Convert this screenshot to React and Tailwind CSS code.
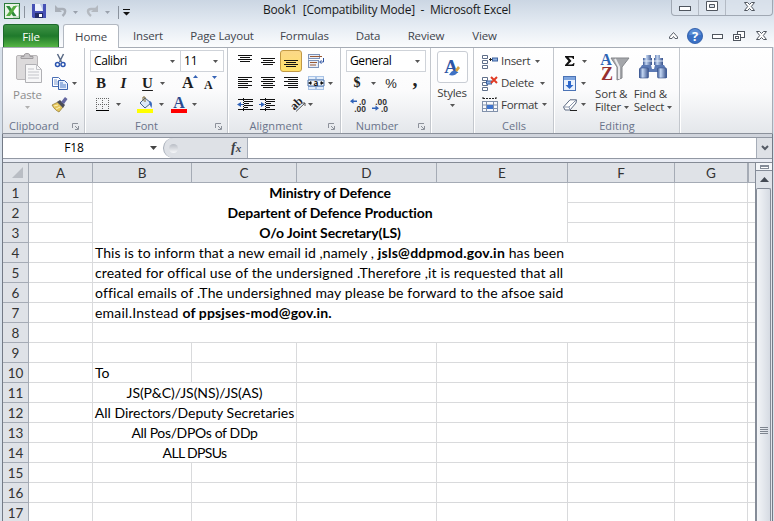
import React from "react";

const UI = "font-['Open_Sans','Noto_Sans',sans-serif]";
const SHEET = "font-['Lato','Open_Sans',sans-serif] [font-variant-ligatures:none]";

function Ico({ w, h, className = "", children }) {
  return (
    <svg width={w} height={h} viewBox={`0 0 ${w} ${h}`} className={`block shrink-0 overflow-visible ${className}`}>
      {children}
    </svg>
  );
}

function Caret({ className = "text-[#555]", big }) {
  return big ? (
    <Ico w={7} h={4} className={className}><path d="M0 0h7L3.500 4z" fill="currentColor" /></Ico>
  ) : (
    <Ico w={5} h={3} className={className}><path d="M0 0h5L2.500 3z" fill="currentColor" /></Ico>
  );
}

function Slot({ className = "", children }) {
  return <span className={`flex shrink-0 items-center justify-center ${className}`}>{children}</span>;
}

function Launcher() {
  return (
    <Ico w={7} h={7}>
      <path d="M0.500 5V0.500H6M3 3l3 3M6.500 3v3.500H3" fill="none" stroke="#8c919a" />
    </Ico>
  );
}

function Group({ className, label, labelClass = "", launcher, children }) {
  return (
    <section className={`flex shrink-0 flex-col border-r border-[#c3c7cd] shadow-[1px_0_0_#fff] ${className}`}>
      <div className="h-[67px]">{children}</div>
      <div className="flex h-[18px] items-center pt-[2px] pr-[5px]">
        <span className={`flex-1 whitespace-nowrap text-center text-[11px] leading-none text-[#69738a] ${labelClass}`}>{label}</span>
        {launcher && <span className="pt-[2px]"><Launcher /></span>}
      </div>
    </section>
  );
}

function Sep() {
  return <span className="h-5 w-px bg-[#c9cdd3]" />;
}

function Lines({ rows }) {
  return (
    <Ico w={14} h={14}>
      {rows.map(([x, y, w], i) => <rect key={i} x={x} y={y} width={w} height="1" fill="#111" />)}
    </Ico>
  );
}

function Combo({ className, children }) {
  return (
    <div className={`flex h-[22px] items-center justify-between border border-[#cfd3d9] bg-white pr-[5px] pl-[3px] text-[12px] text-black ${className}`}>
      <span>{children}</span>
      <Caret />
    </div>
  );
}

function TitleBar() {
  return (
    <header className="flex h-6 items-start pl-1">
      <div className="flex h-6 w-[259px] items-center">
        <Ico w={16} h={16} className="mt-[-2px]">
          <rect x="0.500" y="0.500" width="15" height="15" fill="#e9f4e6" stroke="#2b7a3b" />
          <path d="M11 3h4v11h-6" fill="#fff" stroke="#74ad78" strokeWidth="0.700" />
          <path d="M2 3h3.500l7 10H9z" fill="#2f8c3c" />
          <path d="M9.500 3H13L6 13H2z" fill="#56ad42" />
        </Ico>
        <span className="ml-1 h-3 w-px bg-[#8a929d]" />
        <Ico w={14} h={14} className="ml-[7px] mt-[-2px]">
          <path d="M0 0h14v14H1l-1-1z" fill="#4651b5" />
          <path d="M3 0h8v7H3z" fill="#eef2fb" />
          <path d="M8 0h3v7z" fill="#bac7e8" />
          <path d="M3 9h8v5H3z" fill="#222b66" />
          <path d="M7 10h3v3H7z" fill="#fff" />
        </Ico>
        <Ico w={12} h={12} className="ml-[9px] mt-[-2px]">
          <path d="M3 4h4.500c3.500 0 3.500 4 0 7" fill="none" stroke="#a9afb8" strokeWidth="2.500" />
          <path d="M0 0v7h7z" fill="#a9afb8" />
        </Ico>
        <Caret className="ml-[6px] text-[#9aa1ac]" />
        <Ico w={12} h={12} className="ml-2 mt-[-2px]">
          <path d="M9 4H5C1 4 1 8 5 11" fill="none" stroke="#b4b9c0" strokeWidth="2.500" />
          <path d="M12 0v7H5z" fill="#b4b9c0" />
        </Ico>
        <Caret className="ml-[7px] text-[#9aa1ac]" />
        <span className="ml-2 h-[13px] w-px bg-[#8a929d]" />
        <Ico w={7} h={7} className="ml-1 mt-[1px]">
          <path d="M0 0h7v1H0zM0 3h7L3.500 6.500z" fill="#111" />
        </Ico>
      </div>
      <h1 className="mt-[2px] whitespace-pre text-[12px] leading-4 tracking-[-0.25px] text-[#1a1a1a]">Book1  [Compatibility Mode]  -  Microsoft Excel</h1>
      <div className="mr-px ml-auto flex h-4 w-[102px] rounded-b border border-t-0 border-[#a0a8b3] bg-[#dfe6ee]/60">
        <Slot className="w-[27px] border-r border-[#b3bac4] pt-[1px]">
          <Ico w={12} h={5}><rect x="0.500" y="0.500" width="11" height="4" fill="#fff" stroke="#50565f" /></Ico>
        </Slot>
        <Slot className="w-[27px] border-r border-[#b3bac4] pb-[3px]">
          <Ico w={12} h={10}><path d="M0.500 0.500h11v9H.5zM3.500 3.500v3h5v-3z" fill="#fff" fillRule="evenodd" stroke="#50565f" /></Ico>
        </Slot>
        <Slot className="flex-1 pb-[3px]"><CloseX /></Slot>
      </div>
    </header>
  );
}

function CloseX() {
  return (
    <Ico w={11} h={9}>
      <path d="M.5.5h3l2 2 2-2h3L7.300 4.500l3.200 4h-3l-2-2-2 2h-3l3.200-4z" fill="#fff" stroke="#50565f" />
    </Ico>
  );
}

function Tab({ className, children }) {
  return <span className={`shrink-0 whitespace-nowrap text-center ${className}`}>{children}</span>;
}

function Tabs() {
  return (
    <nav className="flex h-[23px] pl-[3px] text-[11.5px] leading-[24px] tracking-[-0.15px] text-[#3f444c]">
      <span className="w-14 rounded-t-[3px] border border-b-0 border-[#1d6a2c] bg-linear-to-b from-[#3f9446] via-[#1f7a2c] to-[#55b544] text-center leading-[23px] text-white">File</span>
      <span className="relative z-10 ml-1 h-6 w-14 rounded-t-[3px] border border-b-0 border-[#b2b8c1] bg-white text-center leading-[23px]">Home</span>
      <Tab className="w-[58px]">Insert</Tab>
      <Tab className="w-[90px]">Page Layout</Tab>
      <Tab className="w-[75px]">Formulas</Tab>
      <Tab className="w-[52px]">Data</Tab>
      <Tab className="w-[64px]">Review</Tab>
      <Tab className="w-[53px]">View</Tab>
      <div className="ml-auto flex items-center pr-[7px]">
        <Ico w={9} h={7}><path d="M.5 5L4.500.5l4 4.500v1.500H6L4.500 4.500 3 6.500H.5z" fill="#fff" stroke="#5a606a" /></Ico>
        <Ico w={16} h={16} className="ml-[9px]">
          <circle cx="8" cy="8" r="7.600" fill="#3a70c4" stroke="#2a58a5" strokeWidth="0.800" />
          <path d="M2 7a6 6 0 0 1 12 0" fill="#6f9fe0" opacity="0.600" />
          <text x="8" y="12.500" textAnchor="middle" fontSize="13" fontWeight="700" fill="#fff">?</text>
        </Ico>
        <Ico w={11} h={5} className="ml-[9px] mt-[2px]"><rect x="0.500" y="0.500" width="10" height="4" fill="#fff" stroke="#50565f" /></Ico>
        <Ico w={12} h={10} className="ml-[10px]">
          <rect x="4.500" y="0.500" width="7" height="6" fill="#fff" stroke="#50565f" />
          <rect x="0.500" y="3.500" width="7" height="6" fill="#fff" stroke="#50565f" />
          <rect x="2.500" y="5.500" width="3" height="2" fill="#fff" stroke="#50565f" />
        </Ico>
        <span className="ml-[11px]"><CloseX /></span>
      </div>
    </nav>
  );
}

function Clipboard() {
  return (
    <Group className="w-[82px]" label="Clipboard" labelClass="pr-[7px]" launcher>
      <div className="flex">
        <div className="flex w-[49px] flex-col items-center pt-[5px]">
          <Ico w={26} h={30} className="ml-[2px]">
            <rect x="0.500" y="2.500" width="21" height="24" rx="1.500" fill="#dcdadb" stroke="#b9b6b8" />
            <path d="M5 5.500V3.500h3C8 1 9 .5 11 .5s3 .5 3 3h3v2z" fill="#c9c7c9" stroke="#9f9c9f" />
            <path d="M9.500 11.500h11l5 5v13h-16z" fill="#f7f7f8" stroke="#b0b0b4" />
            <path d="M20.500 11.500v5h5M12 16h6M12 19h11M12 22h11M12 25h11" fill="none" stroke="#c3c4c9" />
          </Ico>
          <span className="mt-[4px] text-[11.5px] leading-4 tracking-[-0.1px] text-[#8d8d8d]">Paste</span>
          <Caret className="mt-[3px] text-[#b0b0b0]" />
        </div>
        <div className="pt-[2px]">
          <Slot className="h-[22px] w-[16px]">
            <Ico w={11} h={14}>
              <path d="M2.500 0l4 8M8.500 0l-4 8" stroke="#5a6a85" strokeWidth="1.500" />
              <circle cx="2.500" cy="10.500" r="2" fill="none" stroke="#2c55b0" strokeWidth="1.500" />
              <circle cx="8" cy="10.500" r="2" fill="none" stroke="#2c55b0" strokeWidth="1.500" />
            </Ico>
          </Slot>
          <div className="flex h-[22px] items-center">
            <Ico w={16} h={13}>
              <path d="M.5.5h6l2 2v7h-8z" fill="#fff" stroke="#4a6fb5" />
              <path d="M2 3h3M2 5h5M2 7h5" stroke="#7d9bd1" />
              <path d="M6.500 3.500h6l3 3v6h-9z" fill="#e8f0fc" stroke="#3a62ad" />
              <path d="M8 6h3M8 8h6M8 10h6" stroke="#4f7cc8" />
            </Ico>
            <Caret className="ml-1 text-[#555]" />
          </div>
          <Slot className="h-[21px] w-[16px]">
            <Ico w={16} h={15}>
              <path d="M0 8l6-3 5 5-4 5c-2-1-5-3-7-7z" fill="#e5c65d" stroke="#8e7630" strokeWidth="0.700" />
              <path d="M2 9l4-1M4 12l4-2" stroke="#fff2b5" />
              <path d="M5 5l3-2 5 5-2 3z" fill="#4b4d59" />
              <path d="M9 5l4-5 2.500 2L12 7z" fill="#6366a0" />
            </Ico>
          </Slot>
        </div>
      </div>
    </Group>
  );
}

function FontGroup() {
  return (
    <Group className="w-[143px]" label="Font" launcher labelClass="pr-[7px]">
      <div className="pt-[2px] pl-[5px]">
        <div className="flex h-[22px]">
          <Combo className="w-[91px] tracking-[-0.4px]">Calibri</Combo>
          <Combo className="w-[43px] border-l-0">11</Combo>
        </div>
        <div className="flex h-[22px] items-center font-['Liberation_Serif',serif] text-[15px] leading-none text-[#1d1d1d]">
          <Slot className="w-[22px] font-bold">B</Slot>
          <Slot className="w-[23px] font-bold italic">I</Slot>
          <Slot className="w-[25px] font-bold underline underline-offset-2">U</Slot>
          <Caret />
          <span className="ml-[8px]"><Sep /></span>
          <Slot className="relative ml-[9px] w-[17px] justify-start text-[16px] font-bold">A
            <span className="absolute top-0 left-[11px]"><Ico w={5} h={3}><path d="M0 3h5L2.500 0z" fill="#3563b5" /></Ico></span>
          </Slot>
          <Slot className="relative ml-[5px] w-[12px] justify-start pt-[3px] text-[12px] font-bold">A
            <span className="absolute top-0 left-[8px]"><Ico w={5} h={3}><path d="M0 0h5L2.500 3z" fill="#3563b5" /></Ico></span>
          </Slot>
        </div>
        <div className="flex h-[21px] items-center">
          <Ico w={13} h={13} className="ml-[6px]">
            <path d="M0 .5h13M0 6.500h13M.5 0v12M6.500 0v12M12.500 0v12" fill="none" stroke="#666" strokeDasharray="1 1" />
            <path d="M0 12.500h13" stroke="#000" />
          </Ico>
          <Caret className="ml-[7px] text-[#555]" />
          <span className="ml-[8px]"><Sep /></span>
          <Ico w={16} h={16} className="ml-[8px]">
            <path d="M3 6l5-5 6 5-6 5z" fill="#dce8f8" stroke="#44608f" />
            <path d="M6 4V0h2v5" fill="none" stroke="#7c6a3a" />
            <path d="M12 4c3 0 3.500 3 2.500 7-1-2-2-3-2.500-7z" fill="#3768bd" />
            <rect y="12" width="16" height="4" fill="#ffff00" />
          </Ico>
          <Caret className="ml-[6px] text-[#555]" />
          <Ico w={16} h={16} className="ml-[7px]">
            <text x="8" y="11" textAnchor="middle" fontFamily="Liberation Serif" fontSize="16" fontWeight="700" fill="#2c4a8f">A</text>
            <rect y="12" width="16" height="4" fill="#ff0000" />
          </Ico>
          <Caret className="ml-[5px] text-[#555]" />
        </div>
      </div>
    </Group>
  );
}

function Alignment() {
  return (
    <Group className="w-[113px]" label="Alignment" launcher labelClass="pr-[4px] tracking-[0.1px]">
      <div className="pt-[2px]">
        <div className="flex h-[22px] items-center">
          <span className="ml-[10px]"><Lines rows={[[0, 1, 14], [2, 3, 10], [0, 5, 14], [2, 7, 10]]} /></span>
          <span className="ml-[9px]"><Lines rows={[[0, 4, 14], [2, 6, 10], [0, 8, 14], [2, 10, 10]]} /></span>
          <Slot className="ml-[5px] h-[22px] w-[22px] rounded-[3px] border border-[#c29a45] bg-linear-to-b from-[#fbd888] to-[#ffe069]">
            <Lines rows={[[0, 6, 14], [2, 8, 10], [0, 10, 14], [2, 12, 10]]} />
          </Slot>
          <Ico w={16} h={16} className="ml-[6px]">
            <path d="M.5 1v14M10.500 8v7" stroke="#9fb4d6" />
            <rect x="0.500" y="1.500" width="11" height="4" fill="#e8eef8" stroke="#7d93b8" />
            <rect x="0.500" y="7.500" width="10" height="7" fill="#e8eef8" stroke="#7d93b8" />
            <path d="M2 3.500h12M2 9.500h7M2 12h6" stroke="#9b5b36" />
            <path d="M15.500 5v4h-3M13.500 7.500l-2 1.500 2 1.500" fill="none" stroke="#2d52a0" />
          </Ico>
        </div>
        <div className="flex h-[22px] items-center">
          <span className="ml-[10px]"><Lines rows={[[0, 1, 14], [0, 3, 10], [0, 5, 14], [0, 7, 10], [0, 9, 14], [0, 11, 10]]} /></span>
          <span className="ml-[9px]"><Lines rows={[[0, 1, 14], [2, 3, 10], [0, 5, 14], [2, 7, 10], [0, 9, 14], [2, 11, 10]]} /></span>
          <span className="ml-[9px]"><Lines rows={[[0, 1, 14], [4, 3, 10], [0, 5, 14], [4, 7, 10], [0, 9, 14], [4, 11, 10]]} /></span>
          <Ico w={16} h={14} className="ml-[10px]">
            <rect width="16" height="14" fill="#a9c3e6" />
            <path d="M1 1h6v2H1zM9 1h6v2H9zM1 11h6v2H1zM9 11h6v2H9z" fill="#e3edf9" />
            <path d="M0 4h16v6H0z" fill="#f4f8fd" stroke="#4f74ac" />
            <text x="8" y="9.500" textAnchor="middle" fontSize="8" fontWeight="700" fill="#111">a</text>
            <path d="M0 7h4M12 7h4M3 5.500v3L1 7zM13 5.500v3L15 7z" stroke="#111" strokeWidth="0.700" />
          </Ico>
          <Caret className="ml-[4px] text-[#555]" />
        </div>
        <div className="flex h-[21px] items-center">
          <Indent className="ml-[9px]" />
          <Indent className="ml-[6px]" increase />
          <span className="ml-[7px]"><Sep /></span>
          <Ico w={16} h={14} className="ml-[9px]">
            <text x="0" y="10" fontFamily="Liberation Serif" fontSize="12" fontWeight="700" fill="#222" transform="rotate(-45 5 7)">ab</text>
            <path d="M5 13.500L14 5M11 5h3v3" fill="none" stroke="#555" />
          </Ico>
          <Caret className="ml-[1px] text-[#555]" />
        </div>
      </div>
    </Group>
  );
}

function Indent({ className, increase }) {
  return (
    <Ico w={16} h={13} className={className}>
      <path d="M1 1.500h15M7 3.500h9M7 5.500h5M7 7.500h9M7 9.500h4M1 11.500h15" stroke="#111" />
      <path d="M6.500 0v13" stroke="#111" strokeDasharray="1 1" />
      <path d={increase ? "M0 6h2V4l4 2.500-4 2.500V7H0z" : "M6 6H4V4L0 6.500l4 2.500V7h2z"} fill="#2f62b8" />
    </Ico>
  );
}

function NumberGroup() {
  return (
    <Group className="w-[90px]" label="Number" launcher labelClass="pr-[5px]">
      <div className="pt-[2px] pl-[5px]">
        <Combo className="w-[80px] pr-[4px] tracking-[-0.4px]">General</Combo>
        <div className="flex h-[22px] items-center font-['Liberation_Serif',serif] leading-none text-[#222]">
          <Slot className="w-[22px] text-[14px] font-bold">$</Slot>
          <Caret className="ml-[3px] text-[#555]" />
          <Slot className="ml-[7px] w-[16px] font-['Liberation_Sans',sans-serif] text-[13px]">%</Slot>
          <Slot className="ml-[9px] w-[14px] pb-2 text-[20px] font-bold">,</Slot>
        </div>
        <div className="flex h-[21px] items-center font-['Liberation_Sans',sans-serif]">
          <Ico w={16} h={14} className="ml-[4px]">
            <text x="16" y="6.500" textAnchor="end" fontSize="8.500" fontWeight="700" fill="#333">.0</text>
            <text x="16" y="13.500" textAnchor="end" fontSize="8.500" fontWeight="700" fill="#333">.00</text>
            <path d="M7 2.500H3.500V.5L0 3.200l3.500 2.600V4H7z" fill="#2f62b8" />
          </Ico>
          <Ico w={16} h={14} className="ml-[6px]">
            <text x="15" y="6.500" textAnchor="end" fontSize="8.500" fontWeight="700" fill="#333">.00</text>
            <text x="16" y="13.500" textAnchor="end" fontSize="8.500" fontWeight="700" fill="#333">.0</text>
            <path d="M0 9.500h3.500v-2L7 10.200l-3.500 2.600V11H0z" fill="#2f62b8" />
          </Ico>
        </div>
      </div>
    </Group>
  );
}

function Styles() {
  return (
    <Group className="w-[43px]" label="">
      <div className="flex flex-col items-center pt-[3px]">
        <Slot className="h-8 w-[31px] rounded-[3px] border border-[#c9cdd4] bg-white/70">
          <Ico w={16} h={17}>
            <text x="7" y="14" textAnchor="middle" fontFamily="Liberation Serif" fontSize="19" fontWeight="700" fill="#2d55a5">A</text>
            <path d="M5 16c2-4 4-5 7-4l1 2c-1 2-4 3-8 2z" fill="#3f72c4" />
            <path d="M11 11l3-4 2 2-3 4z" fill="#d8a441" />
          </Ico>
        </Slot>
        <span className="mt-[2px] text-[11.5px] leading-4 tracking-[-0.25px] text-[#3b3b3b]">Styles</span>
        <Caret className="mt-[3px] text-[#555]" />
      </div>
    </Group>
  );
}

function Cells() {
  const grid = <path d="M.5 1.500h5v3h-5zM.5 6.500h5v3h-5zM.5 11.500h5v3h-5z" fill="#fff" stroke="#5f6f8a" />;
  return (
    <Group className="w-[80px]" label="Cells" labelClass="pl-[6px]">
      <div className="pt-[2px] pl-[8px] text-[11.5px] leading-none tracking-[-0.3px] text-[#3b3b3b]">
        <div className="flex h-[22px] items-center">
          <Ico w={16} h={15}>{grid}<path d="M7 5.500h3M8.500 4v3" stroke="#222" /><rect x="10.500" y="4" width="5" height="3" fill="#8eb0e0" stroke="#3d62a0" /></Ico>
          <span className="mr-[5px] ml-[3px]">Insert</span><Caret />
        </div>
        <div className="flex h-[22px] items-center">
          <Ico w={16} h={15}>{grid}<rect x="4.500" y="5" width="5" height="3" fill="#8eb0e0" stroke="#3d62a0" /><path d="M9 1l6 6M15 1L9 7" stroke="#e03a24" strokeWidth="2" /></Ico>
          <span className="mr-[6px] ml-[3px]">Delete</span><Caret />
        </div>
        <div className="flex h-[21px] items-center">
          <Ico w={16} h={16}>
            <path d="M1 1.500h13M1 0v3M14 0v3" stroke="#222" fill="none" strokeDasharray="2 1" />
            <rect x="0.500" y="4.500" width="15" height="10" fill="#f6f8fc" stroke="#8191ab" />
            <path d="M4.500 4v11M11.500 4v11M0 8h16M0 11.500h16" stroke="#8191ab" />
            <rect x="5" y="8" width="6" height="4" fill="#3f74ce" />
          </Ico>
          <span className="mr-[4px] ml-[3px]">Format</span><Caret />
        </div>
      </div>
    </Group>
  );
}

function Editing() {
  return (
    <Group className="w-[126px]" label="Editing" labelClass="pl-[6px] tracking-[0.1px]">
      <div className="flex">
        <div className="w-[38px] pt-[2px] pl-[9px]">
          <div className="flex h-[22px] items-center">
            <Ico w={10} h={10} className="ml-[2px]"><path d="M0 0h9v3H8C7.500 1.500 7 1.500 3.500 1.500L6.500 5l-3.500 3.500c4 0 5 0 5.500-1.500h1L9 10H0V9l3.500-4L0 1z" fill="#111" /></Ico>
            <Caret className="ml-[7px] text-[#555]" />
          </div>
          <div className="flex h-[22px] items-center">
            <Ico w={13} h={15}>
              <rect x="0.500" y="0.500" width="12" height="14" fill="#eaf2fd" stroke="#4b73b5" />
              <rect x="1" y="1" width="11" height="3" fill="#7ea5df" />
              <path d="M5 5h3v4h2.500l-4 4-4-4H5z" fill="#2c67cb" />
            </Ico>
            <Caret className="ml-[5px] text-[#555]" />
          </div>
          <div className="flex h-[21px] items-center">
            <Ico w={14} h={12}>
              <path d="M.5 8L7 .8h6.500L13 4l-6 7H2z" fill="#fff" stroke="#5c6a82" />
              <path d="M.5 8H6l7-7M6 8l1 3" fill="none" stroke="#8b97ad" />
              <path d="M7 11.500h7" stroke="#222" />
            </Ico>
            <Caret className="ml-[4px] text-[#555]" />
          </div>
        </div>
        <div className="flex w-[40px] flex-col items-center pt-[5px]">
          <Ico w={30} h={30} className="ml-[6px]">
            <text x="6" y="12" textAnchor="middle" fontFamily="Liberation Serif" fontSize="16" fontWeight="700" fill="#2e64b5">A</text>
            <text x="7" y="27" textAnchor="middle" fontFamily="Liberation Serif" fontSize="18" fontWeight="700" fill="#962f2f">Z</text>
            <path d="M11 5h18l-7 9v11l-5 2V14z" fill="#a4a6aa" stroke="#85878b" />
            <path d="M15 6l4 8v12" fill="none" stroke="#e9eaec" strokeWidth="2" />
          </Ico>
          <BigLabel a="Sort &" b="Filter" />
        </div>
        <div className="flex w-[42px] flex-col items-center pt-[5px]">
          <Binoculars />
          <BigLabel a="Find &" b="Select" />
        </div>
      </div>
    </Group>
  );
}

function Binoculars() {
  return (
    <Ico w={28} h={30}>
      <defs>
        <linearGradient id="barrel" x1="0" x2="1">
          <stop offset="0" stopColor="#3a5794" /><stop offset="0.350" stopColor="#c3d6f2" /><stop offset="1" stopColor="#36508a" />
        </linearGradient>
      </defs>
      <path d="M7 2h5v3h1v7H4V5h3z" fill="url(#barrel)" />
      <path d="M16 2h5v3h3v7h-9V5h1z" fill="url(#barrel)" />
      <path d="M3 12h9l1 4h2l1-4h9l3 5v8h-9v-6H9v6H0v-8z" fill="#5c7ab4" />
      <rect x="0.500" y="15" width="9" height="10" rx="1" fill="url(#barrel)" stroke="#3b568f" strokeWidth="0.600" />
      <rect x="18.500" y="15" width="9" height="10" rx="1" fill="url(#barrel)" stroke="#3b568f" strokeWidth="0.600" />
      <path d="M4 8h9M15 8h9" stroke="#dfe9f8" />
    </Ico>
  );
}

function BigLabel({ a, b }) {
  return (
    <div className="mt-[4px] whitespace-nowrap text-[11.5px] leading-[14px] tracking-[-0.2px] text-[#3b3b3b]">
      <div>{a}</div>
      <div className="flex h-3 items-center">{b}<Caret className="ml-[3px] text-[#555]" /></div>
    </div>
  );
}

function Ribbon() {
  return (
    <div className="ml-[2px] mr-[1px] flex h-[87px] border border-[#a6acb5] border-b-[#8b919b] bg-linear-to-b from-white via-[#fbfbfc] to-[#e4e7eb]">
      <Clipboard />
      <FontGroup />
      <Alignment />
      <NumberGroup />
      <Styles />
      <Cells />
      <Editing />
    </div>
  );
}

function FormulaBar() {
  return (
    <div className="flex h-[22px] border-y border-[#9298a3] bg-white">
      <div className="flex w-[160px] items-center pl-[1px] text-[12px] text-black">
        <span className="w-[140px] text-center tracking-[-0.2px]">F18</span>
        <span className="ml-[6px]"><Caret big className="text-[#444]" /></span>
      </div>
      <div className="flex w-[85px] items-center rounded-l-full border-r border-l border-[#a6adb8] bg-[#dee1e6] pl-[5px]">
        <span className="size-[9px] rounded-full bg-linear-to-b from-[#b9bdc5] to-[#f7f8fa]" />
        <span className="ml-[53px] font-['Liberation_Serif',serif] text-[14px] leading-none font-bold text-[#3b3f46] italic">f<span className="text-[11px]">x</span></span>
      </div>
      <div className="flex-1" />
      <Slot className="w-[16px] border-l border-[#a6adb8] bg-[#dee1e6]">
        <Ico w={8} h={6}><path d="M1 1l3 3 3-3" fill="none" stroke="#555b65" strokeWidth="2" /></Ico>
      </Slot>
    </div>
  );
}

const columns = [
  ["A", "w-[64px]"], ["B", "w-[99px]"], ["C", "w-[105px]"], ["D", "w-[140px]"],
  ["E", "w-[131px]"], ["F", "w-[107px]"], ["G", "w-[73px]"],
];

function Row({ n, children }) {
  return (
    <div className="flex h-5">
      <div className="w-[26px] shrink-0 border-r border-b border-[#a5abb5] bg-[#dfe2e7] text-center text-[13.500px] leading-[21px] text-[#333]">{n}</div>
      <Cell className="w-[64px]" />
      {children}
      <Cell className="w-[107px]" />
      <Cell className="w-[73px]" />
      <div className="flex-1 border-b border-[#d9dadc]" />
    </div>
  );
}

function Cell({ className, children }) {
  return <div className={`shrink-0 border-r border-b border-[#d9dadc] whitespace-nowrap leading-[20px] ${className}`}>{children}</div>;
}

function Heading({ n, last, children }) {
  return (
    <Row n={n}>
      <div className={`w-[475px] border-r border-[#d9dadc] text-center leading-[20px] font-bold tracking-[-0.09px] ${last ? "border-b" : ""}`}>{children}</div>
    </Row>
  );
}

function BodyRow({ n, className = "", children }) {
  return (
    <Row n={n}>
      <div className={`w-[475px] border-b border-[#d9dadc] pl-[2px] whitespace-nowrap leading-[20px] ${className}`}>{children}</div>
    </Row>
  );
}

function SplitRow({ n, merged, text, className = "" }) {
  return (
    <Row n={n}>
      {merged ? (
        <Cell className={`w-[204px] text-center ${className}`}>{text}</Cell>
      ) : (
        <><Cell className="w-[99px] pl-[2px]">{text}</Cell><Cell className="w-[105px]" /></>
      )}
      <Cell className="w-[140px]" />
      <Cell className="w-[131px]" />
    </Row>
  );
}

function Sheet() {
  return (
    <div className={`min-w-0 flex-1 overflow-hidden bg-white text-[14px] text-black ${SHEET}`}>
      <div className="flex h-5 border-b border-[#a5abb5] bg-[#dfe2e7] text-[13.500px] leading-[21px] text-[#333]">
        <div className="flex w-[26px] shrink-0 items-center justify-end border-r border-[#a5abb5] pr-1">
          <Ico w={12} h={12}><path d="M11 0v11H0z" fill="#b9bdc4" /></Ico>
        </div>
        {columns.map(([c, w]) => <div key={c} className={`shrink-0 border-r border-[#a5abb5] text-center ${w}`}>{c}</div>)}
        <div className="w-px bg-[#a5abb5]" />
      </div>
      <Heading n={1}>Ministry of Defence</Heading>
      <Heading n={2}>Departent of Defence Production</Heading>
      <Heading n={3} last>O/o Joint Secretary(LS)</Heading>
      <BodyRow n={4} className="tracking-[0.080px]">This is to inform that a new email id ,namely , <b className="tracking-[0.250px]">jsls@ddpmod.gov.in</b> has been</BodyRow>
      <BodyRow n={5} className="tracking-[0.140px]">created for offical use of the undersigned .Therefore ,it is requested that all</BodyRow>
      <BodyRow n={6} className="tracking-[0.125px]">offical emails of .The undersighned may please be forward to the afsoe said</BodyRow>
      <BodyRow n={7} className="tracking-[0.220px]">email.Instead <b className="tracking-[0.140px]">of ppsjses-mod@gov.in.</b></BodyRow>
      <BodyRow n={8} />
      <SplitRow n={9} />
      <SplitRow n={10} text="To" />
      <SplitRow n={11} merged text="JS(P&C)/JS(NS)/JS(AS)" className="tracking-[-0.050px]" />
      <SplitRow n={12} merged text="All Directors/Deputy Secretaries" />
      <SplitRow n={13} merged text="All Pos/DPOs of DDp" className="tracking-[-0.350px]" />
      <SplitRow n={14} merged text="ALL DPSUs" className="tracking-[-0.650px]" />
      <SplitRow n={15} />
      <SplitRow n={16} />
      <SplitRow n={17} />
    </div>
  );
}

function ScrollBar() {
  return (
    <div className="flex w-[17px] shrink-0 flex-col border-l border-[#858c98] bg-[#dfe3e9]">
      <Slot className="h-[8px] border-b border-[#858c98] bg-[#f4f6f9]">
        <span className="h-[4px] w-[9px] border border-t-2 border-[#858c98] bg-white" />
      </Slot>
      <Slot className="h-[17px]"><Ico w={9} h={5}><path d="M0 5h9L4.500 0z" fill="#444a54" /></Ico></Slot>
      <div className="mr-px flex flex-1 flex-col items-center rounded-t-[2px] border border-b-0 border-[#858c98] bg-linear-to-r from-[#f3f5f8] to-[#d6dbe3] pt-[238px]">
        <Ico w={8} h={7}><path d="M0 .5h8M0 2.500h8M0 4.500h8M0 6.500h8" stroke="#7e858f" /></Ico>
      </div>
    </div>
  );
}

export default function App() {
  return (
    <div className={`h-[521px] w-[774px] overflow-hidden bg-[#d8e1eb] ${UI}`}>
      <div className="h-[47px] bg-linear-to-b from-[#cbd6e3] via-[#e3eaf2] to-[#fbfcfd]">
        <TitleBar />
        <Tabs />
      </div>
      <Ribbon />
      <div className="mr-[1px] ml-[2px] flex h-[387px] flex-col border-x border-[#737a86] bg-[#d0d4dc] pt-[3px]">
        <FormulaBar />
        <div className="h-[3px] bg-[#e9ecf4]" />
        <div className="flex min-h-0 flex-1 border-t border-[#858b96]">
          <Sheet />
          <ScrollBar />
        </div>
      </div>
    </div>
  );
}
